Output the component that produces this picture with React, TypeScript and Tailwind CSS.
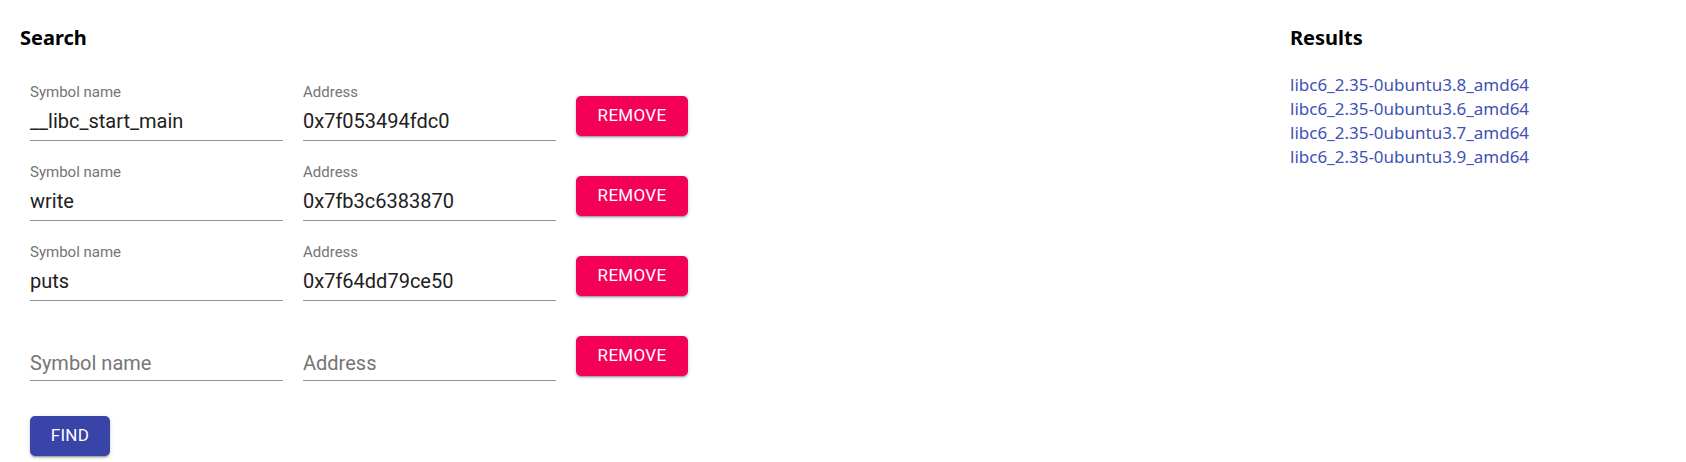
import React from "react";

const rows = [
  { sym: "__libc_start_main", addr: "0x7f053494fdc0" },
  { sym: "write", addr: "0x7fb3c6383870" },
  { sym: "puts", addr: "0x7f64dd79ce50" },
  { sym: "", addr: "" },
];

const results = [
  "libc6_2.35-0ubuntu3.8_amd64",
  "libc6_2.35-0ubuntu3.6_amd64",
  "libc6_2.35-0ubuntu3.7_amd64",
  "libc6_2.35-0ubuntu3.9_amd64",
];

const shadow =
  "shadow-[0px_3px_1px_-2px_rgba(0,0,0,0.2),0px_2px_2px_0px_rgba(0,0,0,0.14),0px_1px_5px_0px_rgba(0,0,0,0.12)]";

function Field({ label, value }: { label: string; value: string }) {
  return (
    <div className="w-[253px] flex flex-col">
      <div className="h-[20px] text-[15px] leading-[20px] text-[#757575]">
        {value ? label : ""}
      </div>
      <div
        className={
          "mt-[5px] h-[34px] text-[20px] leading-[28px] border-b border-[#949494] whitespace-nowrap " +
          (value ? "pb-[5px] text-[#212121]" : "pt-[2px] pb-[3px] text-[#757575]")
        }
      >
        {value || label}
      </div>
    </div>
  );
}

export default function App() {
  return (
    <div className="w-[1686px] h-[462px] overflow-hidden bg-white grid grid-cols-[1fr_376px] px-5">
      <div className="flex flex-col">
        <h3 className="mt-[24px] h-[28px] text-[20px] leading-[28px] font-bold text-black [font-family:'Noto_Sans',sans-serif]">
          Search
        </h3>
        <div className="mt-[30px] pl-[10px] flex flex-col gap-[21px] [font-family:Roboto,sans-serif]">
          {rows.map((r, i) => (
            <div key={i} className="flex items-start gap-5">
              <Field label="Symbol name" value={r.sym} />
              <Field label="Address" value={r.addr} />
              <button
                className={
                  "mt-[14px] w-[112px] h-[40px] rounded-[5px] bg-[#f50057] text-white text-[17px] tracking-[0.3px] font-normal flex items-center justify-center " +
                  shadow
                }
              >
                REMOVE
              </button>
            </div>
          ))}
        </div>
        <div className="mt-[35px] pl-[10px] [font-family:Roboto,sans-serif]">
          <button
            className={
              "w-[80px] h-[40px] rounded-[5px] bg-[#3944a8] text-white text-[17px] tracking-[0.3px] flex items-center justify-center " +
              shadow
            }
          >
            FIND
          </button>
        </div>
      </div>
      <div className="flex flex-col [font-family:'Noto_Sans',sans-serif]">
        <h3 className="mt-[24px] h-[28px] text-[20px] leading-[28px] font-bold text-black">
          Results
        </h3>
        <div className="mt-[21px] flex flex-col">
          {results.map((r) => (
            <a key={r} href="#" className="text-[17px] leading-[24px] text-[#3f51b5]">
              {r}
            </a>
          ))}
        </div>
      </div>
    </div>
  );
}
